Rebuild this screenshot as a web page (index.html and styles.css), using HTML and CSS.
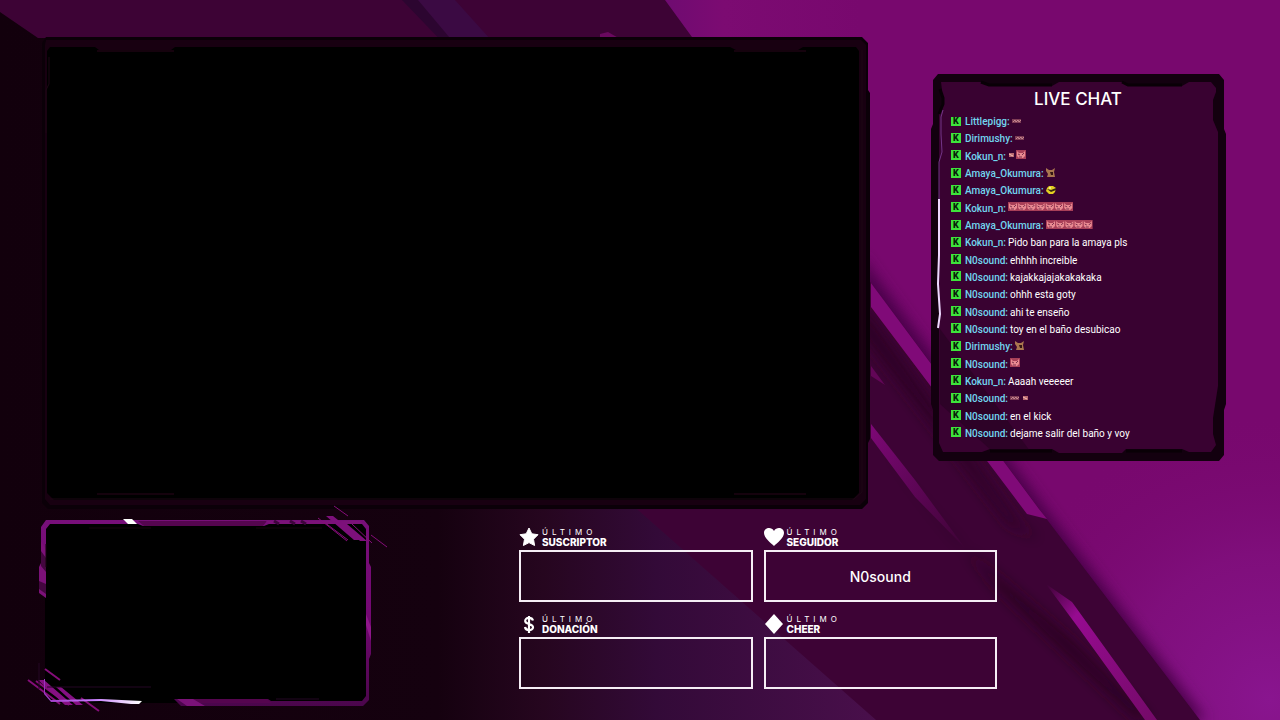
FILE: index.html
```
<!doctype html>
<html lang="es">
<head>
  <meta charset="UTF-8">
  <meta name="viewport" content="width=device-width, initial-scale=1.0">
  <title>Stream Overlay</title>
  <link rel="stylesheet" href="styles.css">
</head>
<body>
  <svg class="backdrop" viewBox="0 0 1280 720" preserveAspectRatio="xMidYMid slice" aria-hidden="true">
    <defs>
      <linearGradient id="leftShade" gradientUnits="userSpaceOnUse" x1="0" x2="876" y1="0" y2="0">
        <stop offset="0" stop-color="#12000c"/>
        <stop offset=".5" stop-color="#15010f"/>
        <stop offset=".62" stop-color="#26061f"/>
        <stop offset=".75" stop-color="#330a38"/>
        <stop offset="1" stop-color="#490f4b"/>
      </linearGradient>
      <radialGradient id="violet" gradientUnits="userSpaceOnUse" cx="1270" cy="700" r="290">
        <stop offset="0" stop-color="#89158f"/>
        <stop offset=".5" stop-color="#81107f" stop-opacity=".8"/>
        <stop offset="1" stop-color="#78086e" stop-opacity="0"/>
      </radialGradient>
      <linearGradient id="topGlow" gradientUnits="userSpaceOnUse" x1="665" x2="860" y1="0" y2="0">
        <stop offset="0" stop-color="#6f0b71"/>
        <stop offset=".3" stop-color="#7c0b72"/>
        <stop offset="1" stop-color="#78086e"/>
      </linearGradient>
      <linearGradient id="ray" x1="0" x2="1" y1="0" y2="1">
        <stop offset="0" stop-color="#3d0335"/>
        <stop offset=".25" stop-color="#960b90"/>
        <stop offset="1" stop-color="#740a68"/>
      </linearGradient>
      <linearGradient id="thinRay" x1="0" x2="1" y1="0" y2="1">
        <stop offset="0" stop-color="#7d0876"/>
        <stop offset="1" stop-color="#3d0335"/>
      </linearGradient>
      <filter id="soft" x="-20%" y="-20%" width="140%" height="140%"><feGaussianBlur stdDeviation="7"/></filter>
    </defs>
    <rect width="1280" height="720" fill="#78086e"/>
    <path d="M665 0H860L900 50H692z" fill="url(#topGlow)"/>
    <rect x="940" y="400" width="340" height="320" fill="url(#violet)"/>
    <path d="M860 255L1045 508L1206 720H1180L860 300z" fill="#4a0449" filter="url(#soft)"/>
    <path d="M0 0H665L871 283L1045 517L1200 720H0z" fill="#3d0335"/>
    <path d="M402 0H450L490 50H450z" fill="#2c0530"/>
    <path d="M418 0H455L500 50H460z" fill="#3b0a43"/>
    <path d="M600 34L608 32L622 40H600z" fill="#6a095f"/>
    <path d="M860 305L1018 524L1040 540L1010 525L860 330z" fill="#2a0224" filter="url(#soft)"/>
    <path d="M871 283L1039 509L1047 519L1027 514L871 307z" fill="#800a78"/>
    <path d="M871 366L885 385L871 376z" fill="#620657"/>
    <path d="M871 440L1000 590L1138 720H1150L1070 640L960 545z" fill="#25021f" filter="url(#soft)"/>
    <path d="M871 424L915 480L965 548L915 497L871 438z" fill="url(#thinRay)"/>
    <path d="M1046 584L1072 602L1157 720H1145L1080 630z" fill="url(#ray)"/>
    <path d="M0 12L38 38H46V480H604L876 720H0z" fill="url(#leftShade)"/>
  </svg>

  <main class="overlay">
    <section class="top-row">
      <div class="game" aria-label="Juego">
        <svg viewBox="0 0 827 472" aria-hidden="true">
          <path d="M4 0H820L826 6V53L828 56V402L826 406V466L820 472H6L0 466V6z" fill="#0b0008"/>
          <path d="M4 3H819L824 8V462L818 468H8L3 462V8z" fill="#180011"/>
          <path d="M8 10H53L57 13H129L133 10H688L694 13H756L761 10H814L817 14V456L810 463H12L5 456V14z" fill="#000"/>
          <path d="M55 14H132M692 14H764M55 457H132M692 457H764" stroke="#2b041b"/>
          <path d="M8 462H812L820 455V13M7 20V47L4 53V96" fill="none" stroke="#1d0715"/>
        </svg>
      </div>

      <section class="chat">
        <svg class="chat-frame" viewBox="0 0 292 387" preserveAspectRatio="none" aria-hidden="true">
          <path d="M6 0H287L292 6V55L294 60V330L292 336V381L287 387H7L1 381V336L-1 330V55L1 50V6z" fill="#13000f"/>
          <path d="M9 8H49L57 12H120L127 8H190L196 12H250L257 8H279L284 14V18L281 26V46L286 58V312L281 344V360L284 371L279 378H257L250 375H194L190 379H127L120 375H58L50 378H11L7 369V38L10 30V16z" fill="#390231"/>
          <path d="M8 330L60 377H98L8 255z" fill="#21011d" opacity=".5"/>
          <path d="M8 15L11 24V30L7 40M49 8L57 11H120M190 8L196 11H250M58 377H120M194 377H250" fill="none" stroke="#090006" stroke-width="3"/>
          <path d="M11 36L9 43V60L10 78L7 88V150" fill="none" stroke="#733588"/>
          <path d="M7 125V181L6 210L8 240L6 254" fill="none" stroke="#eed8ff" stroke-width="2"/>
        </svg>
        <h1>LIVE CHAT</h1>
        <ul class="messages">
          <li><b class="badge">K</b><strong>Littlepigg:</strong><svg class="emote" viewBox="0 0 10 10"><use href="#tiny"/></svg></li>
          <li><b class="badge">K</b><strong>Dirimushy:</strong><svg class="emote" viewBox="0 0 10 10"><use href="#tiny"/></svg></li>
          <li><b class="badge">K</b><strong>Kokun_n:</strong><svg class="emote small" viewBox="0 0 6 10"><use href="#dot"/></svg><svg class="emote" viewBox="0 0 10 10"><use href="#pig"/></svg></li>
          <li><b class="badge">K</b><strong>Amaya_Okumura:</strong><svg class="emote" viewBox="0 0 10 10"><use href="#dog"/></svg></li>
          <li><b class="badge">K</b><strong>Amaya_Okumura:</strong><svg class="emote" viewBox="0 0 10 10"><use href="#cap"/></svg></li>
          <li><b class="badge">K</b><strong>Kokun_n:</strong><svg class="emote run-7" viewBox="0 0 65 10"><use href="#pig"/><use href="#pig" x="9.2"/><use href="#pig" x="18.4"/><use href="#pig" x="27.6"/><use href="#pig" x="36.8"/><use href="#pig" x="46"/><use href="#pig" x="55.2"/></svg></li>
          <li><b class="badge">K</b><strong>Amaya_Okumura:</strong><svg class="emote run-5" viewBox="0 0 47 10"><use href="#pig"/><use href="#pig" x="9.2"/><use href="#pig" x="18.4"/><use href="#pig" x="27.6"/><use href="#pig" x="36.8"/></svg></li>
          <li><b class="badge">K</b><strong>Kokun_n:</strong><span>Pido ban para la amaya pls</span></li>
          <li><b class="badge">K</b><strong>N0sound:</strong><span>ehhhh increible</span></li>
          <li><b class="badge">K</b><strong>N0sound:</strong><span>kajakkajajakakakaka</span></li>
          <li><b class="badge">K</b><strong>N0sound:</strong><span>ohhh esta goty</span></li>
          <li><b class="badge">K</b><strong>N0sound:</strong><span>ahi te enseño</span></li>
          <li><b class="badge">K</b><strong>N0sound:</strong><span>toy en el baño desubicao</span></li>
          <li><b class="badge">K</b><strong>Dirimushy:</strong><svg class="emote" viewBox="0 0 10 10"><use href="#dog"/></svg></li>
          <li><b class="badge">K</b><strong>N0sound:</strong><svg class="emote" viewBox="0 0 10 10"><use href="#pig"/></svg></li>
          <li><b class="badge">K</b><strong>Kokun_n:</strong><span>Aaaah veeeeer</span></li>
          <li><b class="badge">K</b><strong>N0sound:</strong><svg class="emote" viewBox="0 0 10 10"><use href="#tiny"/></svg><svg class="emote small" viewBox="0 0 6 10"><use href="#dot"/></svg></li>
          <li><b class="badge">K</b><strong>N0sound:</strong><span>en el kick</span></li>
          <li><b class="badge">K</b><strong>N0sound:</strong><span>dejame salir del baño y voy</span></li>
        </ul>
      </section>
    </section>

    <section class="bottom-row">
      <div class="webcam" aria-label="Cámara">
        <svg viewBox="1 0 330 188" aria-hidden="true">
          <defs>
            <linearGradient id="side" x1="0" x2="0" y1="0" y2="1">
              <stop offset="0" stop-color="#770f79"/>
              <stop offset=".5" stop-color="#740873"/>
              <stop offset="1" stop-color="#4b064c"/>
            </linearGradient>
            <linearGradient id="spark" gradientUnits="userSpaceOnUse" x1="3" x2="100" y1="0" y2="0">
              <stop offset="0" stop-color="#9b35bf"/>
              <stop offset=".5" stop-color="#c87aff"/>
              <stop offset="1" stop-color="#fff"/>
            </linearGradient>
          </defs>
          <path d="M6 4H322L327 9V177L321 184H10L4 177V9z" fill="#000"/>
          <path d="M0 50V8L5 1H323L328 7V44L330 48V135L328 140V181L322 187H140L133 180H227L230 182H321L325 177V10L321 5H228L223 7H102L97 5H9L5 10V50z" fill="url(#side)"/>
          <path d="M97 2H226L222 7H103zM139 180H226L231 184H145z" fill="#55054f"/>
          <path d="M225 2H320L323 5H228zM136 180H152L164 187H146z" fill="#7b1278"/>
          <path d="M233 2l5 3M249 2l5 3M260 2l5 3" stroke="#3e043c" stroke-width="3"/>
          <path d="M82 0H91L96 5H87z" fill="#fff"/>
          <path d="M0 22L5 31V79L-2 74V48L0 44z" fill="#7b1178"/>
          <path d="M0 32L5 39V53L0 47zM-2 62L5 65V75L-2 70z" fill="#43063f"/>
          <path d="M325 95L330 108V122L325 106z" fill="#8f168b"/>
          <path d="M293-13L307-3M277-1L306 22M283 3L307 21M311 5L331 24M330 16L346 28" stroke="#850d79"/>
          <path d="M285-3H292L322 21H313zM298 1L306 5L326 22H319z" fill="#7d107b"/>
          <path d="M5 48V25M48 9H110M215 9H281" stroke="#16040e" fill="none"/>
          <path d="M4 150L19 161M-13 161L19 185M-5 162L28 186M40 179L58 192" stroke="#850d79" stroke-width="2"/>
          <path d="M-3 161H3L32 186H24zM15 168H20L42 186H35z" fill="#851083"/>
          <path d="M-2 144V170M6 168H110M235 180H278" stroke="#240624" fill="none"/>
          <path d="M4 160V174L10 181L60 180L101 182L98 185H90L60 182L10 183L3 175V160z" fill="url(#spark)"/>
        </svg>
      </div>

      <div class="alerts">
        <article class="alert">
          <header>
            <svg class="icon" viewBox="0 0 20 20" aria-hidden="true"><path d="M10 1l2.800 5.800 6.200.9-4.500 4.500 1.100 6.300L10 15.600l-5.600 2.900 1.100-6.300L1 7.700l6.200-.9z" fill="#fff" stroke="#fff" stroke-linejoin="round"/></svg>
            <h2><small>ÚLTIMO</small>SUSCRIPTOR</h2>
          </header>
          <div class="box"></div>
        </article>
        <article class="alert">
          <header>
            <svg class="icon" viewBox="0 0 20 20" aria-hidden="true"><path d="M10 19C7 16 0 11 0 6 0 1 7-1 10 4c3-5 10-3 10 2 0 5-7 10-10 13z" fill="#fff"/></svg>
            <h2><small>ÚLTIMO</small>SEGUIDOR</h2>
          </header>
          <div class="box">N0sound</div>
        </article>
        <article class="alert">
          <header>
            <svg class="icon" viewBox="0 0 20 20" aria-hidden="true"><path d="M14 6.500C13 3 6 3 6.200 7c0 4 7.800 2 7.800 6.200C14 17 6.500 17 6 13M10 2v17" fill="none" stroke="#fff" stroke-width="2.200"/></svg>
            <h2><small>ÚLTIMO</small>DONACIÓN</h2>
          </header>
          <div class="box"></div>
        </article>
        <article class="alert">
          <header>
            <svg class="icon" viewBox="0 0 20 20" aria-hidden="true"><path d="M10 0l9 10-9 10L1 10z" fill="#fff"/></svg>
            <h2><small>ÚLTIMO</small>CHEER</h2>
          </header>
          <div class="box"></div>
        </article>
      </div>
    </section>
  </main>

  <!-- chat emotes -->
  <svg class="sprites" aria-hidden="true">
    <symbol id="pig" viewBox="0 0 10 10" width="10" height="10">
      <path d="M0 0H10V9H0z" fill="#a83f58"/>
      <path d="M1 1L3 3H7L9 1V6L7 8H3L1 6z" fill="#e98a91"/>
      <path d="M2 4L4 5M8 3L6 5M3 7H6" stroke="#7b2f4c"/>
    </symbol>
    <symbol id="tiny" viewBox="0 0 10 10" width="10" height="10">
      <path d="M0 3H9V7H0z" fill="#7e3c55"/>
      <path d="M1 6L3 4L4 6L6 4L7 6L9 4" fill="none" stroke="#c68790"/>
    </symbol>
    <symbol id="dot" viewBox="0 0 6 10" width="6" height="10">
      <path d="M1 3H6V7H1z" fill="#b76870"/>
      <path d="M1 4L5 6" stroke="#fac2b4"/>
    </symbol>
    <symbol id="dog" viewBox="0 0 10 10" width="10" height="10">
      <path d="M0 0L3 2H6L9 0L8 4L9 9H1L2 6L0 3z" fill="#a9764f"/>
      <path d="M4 4H7V7H5z" fill="#341511"/>
    </symbol>
    <symbol id="cap" viewBox="0 0 10 10" width="10" height="10">
      <path d="M1 3L3 1H7L10 3L9 7L7 9H3L0 6z" fill="#e3cf22"/>
      <path d="M1 4L5 5L10 3V5L5 7z" fill="#37280f"/>
      <path d="M3 3H5" stroke="#fff"/>
    </symbol>
  </svg>
</body>
</html>
```
FILE: styles.css
```
* {
  margin: 0;
  padding: 0;
  box-sizing: border-box;
}
body {
  min-height: 100vh;
  background: #3d0335;
  color: #fff;
  font-family: "Inter", sans-serif;
  overflow: hidden;
}
.backdrop {
  position: absolute;
  top: 0;
  left: 0;
  width: 100%;
  height: 100%;
  z-index: -1;
}
.sprites {
  position: absolute;
  width: 0;
  height: 0;
}
.overlay {
  padding: 37px 56px 0 42px;
}
.top-row {
  display: grid;
  grid-template-columns: 827fr 292fr;
  gap: 63px;
  align-items: start;
}
.game svg,
.webcam svg {
  display: block;
  width: 100%;
  overflow: visible;
}

/* chat */
.chat {
  position: relative;
  display: flex;
  flex-direction: column;
  margin-top: 37px;
  padding: 12px 19px 19px;
  aspect-ratio: 292 / 387;
}
.chat-frame {
  position: absolute;
  top: 0;
  left: 0;
  width: 100%;
  height: 100%;
  overflow: visible;
  z-index: -1;
}
.chat h1 {
  font-size: 17px;
  font-weight: 500;
  line-height: 27px;
  text-align: center;
}
.messages {
  flex: 1;
  display: grid;
  grid-auto-rows: 1fr;
  list-style: none;
  font-family: "Roboto", sans-serif;
  font-size: 10px;
  clip-path: inset(4px 0 0 0);
}
.messages li {
  display: flex;
  align-items: center;
  gap: 2px;
  white-space: nowrap;
}
.messages strong {
  color: #72d5ef;
  font-weight: 500;
}
.badge {
  width: 10px;
  height: 10px;
  margin: 0 2px 2px 0;
  border: 1px solid #3ee33b;
  background: #3ee33b;
  color: #081b08;
  font-size: 9px;
  font-weight: 900;
  line-height: 8px;
  text-align: center;
}
.emote {
  width: 10px;
  height: 10px;
  margin-bottom: 2px;
}
.small {
  width: 6px;
}
.run-7 {
  width: 65px;
}
.run-5 {
  width: 47px;
}

/* webcam and alerts */
.bottom-row {
  display: grid;
  grid-template-columns: 330fr 147fr 478fr 227fr;
  align-items: start;
}
.webcam {
  margin-top: 10px;
}
.alerts {
  grid-column: 3;
  display: grid;
  grid-template-columns: 1fr 1fr;
  gap: 12px 11px;
  margin-top: 18px;
}
.alert header {
  display: flex;
  align-items: center;
  gap: 3px;
  height: 20px;
  margin-bottom: 3px;
}
.icon {
  width: 20px;
  height: 20px;
}
.alert h2 {
  font-size: 10px;
  font-weight: 800;
  line-height: 10px;
}
.alert small {
  display: block;
  font-size: 8px;
  font-weight: 400;
  line-height: 9px;
  letter-spacing: 4px;
}
.box {
  display: flex;
  align-items: center;
  justify-content: center;
  height: 52px;
  border: 2px solid #f5eef5;
  font-size: 14px;
  font-weight: 500;
}
```
